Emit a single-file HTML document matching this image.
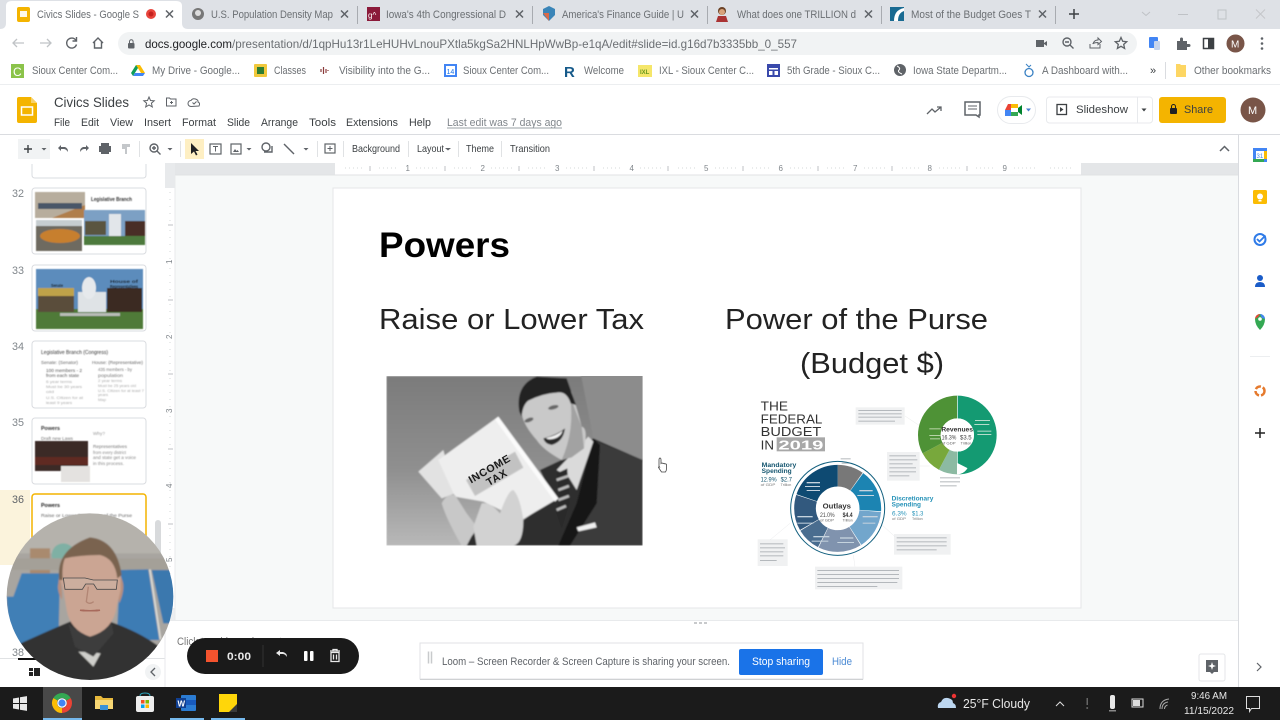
<!DOCTYPE html>
<html><head><meta charset="utf-8"><title>Civics Slides</title>
<style>
html,body{margin:0;padding:0;width:1280px;height:720px;overflow:hidden;background:#fff}
svg{display:block;filter:blur(.35px)}
text{font-family:"Liberation Sans",sans-serif;fill:#5f6368;font-size:11px}
.d{fill:#3c4043}.k{fill:#000}.w{fill:#fff}.g{fill:#80868b}
.s{fill:none;stroke:#5f6368;stroke-width:1.4}
.x{fill:none;stroke:#5f6368;stroke-width:1.5}
.t{fill:#6b6f73}
</style></head><body>
<svg width="1280" height="720" viewBox="0 0 1280 720" xmlns="http://www.w3.org/2000/svg">
<defs>
<filter id="b1"><feGaussianBlur stdDeviation="0.5"/></filter>
<filter id="b2"><feGaussianBlur stdDeviation="1"/></filter>
<filter id="b3"><feGaussianBlur stdDeviation="2.500"/></filter>
<clipPath id="cam"><circle cx="270" cy="320" r="250"/></clipPath>
<clipPath id="tax"><rect x="19" y="18" width="769" height="509"/></clipPath>
<linearGradient id="taxbg" x1="0" y1="0" x2="0" y2="1"><stop offset="0" stop-color="#7b7b7b"/><stop offset=".55" stop-color="#8f8f8f"/><stop offset="1" stop-color="#b8b8b8"/></linearGradient>
</defs>

<!-- tab strip -->
<rect width="1280" height="29" fill="#dee1e6"/>
<path d="M0 29Q6 29 6 23V6Q6 1 12 1H176Q182 1 182 6V23Q182 29 188 29Z" fill="#fff"/>
<rect x="17" y="7" width="13" height="15" rx="2" fill="#f4b400"/><rect x="20" y="11" width="7" height="6" fill="#fff" opacity=".9"/>
<text x="37" y="18" textLength="102" lengthAdjust="spacingAndGlyphs" class="t">Civics Slides - Google S</text>
<circle cx="151" cy="14" r="5" fill="#e8453c"/><circle cx="151" cy="14" r="2.500" fill="#c5221f"/>
<path d="M166 10.500l7 7m0-7l-7 7" class="x"/>
<circle cx="198" cy="14" r="6" fill="#777"/><circle cx="198" cy="13" r="3" fill="#ddd"/>
<text x="211" y="18" textLength="122" lengthAdjust="spacingAndGlyphs" class="t">U.S. Population Density Map</text>
<path d="M341 10.500l7 7m0-7l-7 7" class="x"/><rect x="357" y="6" width="1" height="18" fill="#a8abb0"/>
<rect x="367" y="7" width="13" height="14" fill="#8b1a3a"/><text x="368" y="18" style="font-size:8px;fill:#fff">g^</text>
<text x="386" y="18" textLength="120" lengthAdjust="spacingAndGlyphs" class="t">Iowa's 4th Congressional D</text>
<path d="M516 10.500l7 7m0-7l-7 7" class="x"/><rect x="532" y="6" width="1" height="18" fill="#a8abb0"/>
<path d="M543 9l6-3 6 3v6l-6 6-6-6z" fill="#3a85b8"/><path d="M543 13l6 8 0-8z" fill="#d96b4a"/>
<text x="562" y="18" textLength="122" lengthAdjust="spacingAndGlyphs" class="t">America's Finance Guide | U</text>
<path d="M691 10.500l7 7m0-7l-7 7" class="x"/><rect x="707" y="6" width="1" height="18" fill="#a8abb0"/>
<circle cx="722" cy="11" r="4" fill="#6b4226"/><circle cx="722" cy="12" r="3" fill="#d9a27a"/><path d="M716 22l2-6h8l2 6z" fill="#a33"/>
<text x="737" y="18" textLength="119" lengthAdjust="spacingAndGlyphs" class="t">What does one TRILLION d</text>
<path d="M865 10.500l7 7m0-7l-7 7" class="x"/><rect x="881" y="6" width="1" height="18" fill="#a8abb0"/>
<rect x="890" y="7" width="14" height="14" fill="#1a6b92"/><path d="M894 21q0-11 10-13v3q-6 2-6 10z" fill="#fff"/>
<text x="911" y="18" textLength="120" lengthAdjust="spacingAndGlyphs" class="t">Most of the Budget Goes T</text>
<path d="M1039 10.500l7 7m0-7l-7 7" class="x"/><rect x="1055" y="6" width="1" height="18" fill="#a8abb0"/>
<path d="M1074 9v10m-5-5h10" fill="none" stroke="#3c4043" stroke-width="1.500"/>
<path d="M1142 12l4 3.500 4-3.500" fill="none" stroke="#bfc2c6"/>
<rect x="1178" y="14" width="10" height="1" fill="#bfc2c6"/>
<rect x="1218" y="10" width="8" height="9" fill="none" stroke="#bfc2c6"/>
<path d="M1256 9.500l9 9m0-9l-9 9" fill="none" stroke="#c4c6ca"/>

<!-- address bar -->
<rect y="29" width="1280" height="29" fill="#fff"/>
<rect x="118" y="32" width="1019" height="23" rx="11.500" fill="#f1f3f4"/>
<path d="M24 43H13m4-4l-4 4 4 4" fill="none" stroke="#c0c3c6" stroke-width="1.300"/>
<path d="M40 43h11m-4-4l4 4-4 4" fill="none" stroke="#c0c3c6" stroke-width="1.300"/>
<path d="M76 40.500a5 5 0 1 0 .5 4M76.500 37v4h-4" fill="none" stroke="#5f6368" stroke-width="1.400"/>
<path d="M93 43l5-5 5 5m-8.500-1v6h7v-6" fill="none" stroke="#5f6368" stroke-width="1.400"/>
<rect x="128" y="43" width="6.500" height="5.500" rx="1" fill="#5f6368"/><path d="M129.500 43v-1.500a1.800 1.800 0 0 1 3.600 0V43" fill="none" stroke="#5f6368"/>
<text x="145" y="48" textLength="87" lengthAdjust="spacingAndGlyphs" style="font-size:12px;fill:#202124">docs.google.com</text>
<text x="232" y="48" textLength="565" lengthAdjust="spacingAndGlyphs" style="font-size:12px;fill:#6b6f73">/presentation/d/1qpHu13r1LeHUHvLnouPXtla5kgSa2HNLHpWwBp-e1qA/edit#slide=id.g16d7b3335bb_0_557</text>
<rect x="1036" y="40" width="8" height="7" fill="#5f6368"/><path d="M1044 43l3-2v5l-3-2z" fill="#5f6368"/>
<circle cx="1067" cy="42" r="4" class="s"/><path d="M1070 45l3.500 3.500M1065 42h4" class="s"/>
<path d="M1090 44v4h10v-4M1093 44q1-4 5-4V38l3.500 3.500-3.500 3v-2q-3 0-5 1z" fill="none" stroke="#5f6368"/>
<path d="M1121 37.500l1.700 3.800 4 .4-3 2.700.9 4-3.600-2.100-3.600 2.100.9-4-3-2.700 4-.4z" fill="none" stroke="#5f6368" stroke-width="1.300"/>
<rect x="1149" y="37" width="9" height="11" rx="1" fill="#4285f4"/><rect x="1154" y="41" width="6" height="9" rx="1" fill="#c6d4ec"/>
<path d="M1177 41h3v-2a1.500 1.500 0 0 1 3 0v2h4v3h2a1.500 1.500 0 0 1 0 3h-2v3h-10z" fill="#5f6368"/>
<rect x="1203.500" y="38.500" width="10" height="10" fill="none" stroke="#3c4043" stroke-width="1.500"/><rect x="1208" y="38" width="6" height="11" fill="#3c4043"/>
<circle cx="1235.500" cy="43.500" r="9" fill="#795548"/><text x="1231" y="47.500" style="font-size:10px;fill:#fff">M</text>
<circle cx="1262" cy="38.500" r="1.300" fill="#5f6368"/><circle cx="1262" cy="43.500" r="1.300" fill="#5f6368"/><circle cx="1262" cy="48.500" r="1.300" fill="#5f6368"/>

<!-- bookmarks -->
<rect y="58" width="1280" height="27" fill="#fff"/><rect y="84.500" width="1280" height="1" fill="#dadce0"/>
<rect x="11" y="64" width="13" height="14" fill="#8bc34a"/><text x="13" y="76" style="font-size:12px;fill:#fff">C</text>
<text x="32" y="74" textLength="86" lengthAdjust="spacingAndGlyphs" class="t">Sioux Center Com...</text>
<path d="M136 65h4l5 8h-4z" fill="#fbbc04"/><path d="M136 65l-5 8 2 3 5-8z" fill="#0f9d58"/><path d="M133 76h10l2-3h-10z" fill="#4285f4"/>
<text x="152" y="74" textLength="88" lengthAdjust="spacingAndGlyphs" class="t">My Drive - Google...</text>
<rect x="254" y="64" width="13" height="13" rx="1" fill="#f0c83c"/><rect x="257" y="67" width="7" height="7" fill="#2e7d32"/>
<text x="274" y="74" textLength="32" lengthAdjust="spacingAndGlyphs" class="t">Classes</text>
<path d="M321 72v-3m2.500 5v-7m2.500 6v-4m2 2v-1" fill="none" stroke="#8a3b3b" stroke-width="1.200"/>
<text x="339" y="74" textLength="91" lengthAdjust="spacingAndGlyphs" class="t">Visibility into the G...</text>
<rect x="444" y="64" width="13" height="13" fill="#4285f4"/><rect x="446" y="66" width="9" height="9" fill="#fff"/><text x="446.500" y="74" style="font-size:7px;fill:#1a73e8">14</text>
<text x="463" y="74" textLength="86" lengthAdjust="spacingAndGlyphs" class="t">Sioux Center Com...</text>
<text x="564" y="77" style="font-size:15px;font-weight:bold;fill:#165a8a">R</text>
<text x="584" y="74" textLength="40" lengthAdjust="spacingAndGlyphs" class="t">Welcome</text>
<rect x="638" y="65" width="14" height="12" fill="#f5e66a"/><text x="640" y="74" style="font-size:6px;fill:#6a9a1f;font-weight:bold">IXL</text>
<text x="659" y="74" textLength="95" lengthAdjust="spacingAndGlyphs" class="t">IXL - Sioux Center C...</text>
<rect x="767" y="64" width="13" height="13" fill="#3949ab"/><rect x="769" y="68" width="9" height="1.500" fill="#fff"/><rect x="769" y="71" width="3.500" height="4" fill="#fff"/><rect x="774.500" y="71" width="3.500" height="4" fill="#fff"/>
<text x="787" y="74" textLength="93" lengthAdjust="spacingAndGlyphs" class="t">5th Grade - Sioux C...</text>
<circle cx="900" cy="70" r="6" fill="#5f6368"/><path d="M897 66q4 2 2 4t3 4" fill="none" stroke="#fff"/>
<text x="913" y="74" textLength="94" lengthAdjust="spacingAndGlyphs" class="t">Iowa State Departm...</text>
<circle cx="1029" cy="72.500" r="4" fill="none" stroke="#3b82c4" stroke-width="1.300"/><path d="M1026 64l3 3 2-2" fill="none" stroke="#3b82c4"/>
<text x="1042" y="74" textLength="86" lengthAdjust="spacingAndGlyphs" class="t">A Dashboard with...</text>
<text x="1150" y="74" style="font-size:11px;fill:#3c4043">»</text><rect x="1165" y="62" width="1" height="17" fill="#dadce0"/>
<path d="M1176 64h4l1 1h5v12h-10z" fill="#fdd663"/>
<text x="1194" y="74" textLength="77" lengthAdjust="spacingAndGlyphs" class="t">Other bookmarks</text>

<!-- docs header -->
<rect y="85" width="1280" height="49" fill="#fff"/><rect y="134" width="1280" height="1" fill="#dadce0"/>
<path d="M17 99q0-2 2-2h12l6 6v18q0 2-2 2H19q-2 0-2-2z" fill="#f4b400"/><path d="M31 97l6 6h-6z" fill="#f8d26a"/><rect x="21.500" y="107" width="11" height="8" fill="none" stroke="#fff" stroke-width="1.500"/>
<text x="54" y="107" textLength="75" lengthAdjust="spacingAndGlyphs" style="font-size:14px;fill:#3c4043">Civics Slides</text>
<path d="M149 97l1.500 3.500 3.700.3-2.800 2.400.9 3.700-3.300-2-3.300 2 .9-3.700-2.800-2.400 3.700-.3z" fill="none" stroke="#5f6368"/>
<path d="M166.500 98h3l1 1h5.500v7h-9.500z M170 102.500h3M171.500 101v3" fill="none" stroke="#5f6368"/>
<path d="M191 106.500a3 3 0 0 1 0-6q1.500-2.500 4.500-1.500t2.500 3q2.500 1 1 4z M192.500 102.500l1.500 1.500 2.500-2.500" fill="none" stroke="#5f6368"/>
<text x="54" y="126" textLength="16" lengthAdjust="spacingAndGlyphs" class="d">File</text>
<text x="81" y="126" textLength="18" lengthAdjust="spacingAndGlyphs" class="d">Edit</text>
<text x="110" y="126" textLength="23" lengthAdjust="spacingAndGlyphs" class="d">View</text>
<text x="144" y="126" textLength="27" lengthAdjust="spacingAndGlyphs" class="d">Insert</text>
<text x="182" y="126" textLength="34" lengthAdjust="spacingAndGlyphs" class="d">Format</text>
<text x="227" y="126" textLength="23" lengthAdjust="spacingAndGlyphs" class="d">Slide</text>
<text x="261" y="126" textLength="37" lengthAdjust="spacingAndGlyphs" class="d">Arrange</text>
<text x="309" y="126" textLength="27" lengthAdjust="spacingAndGlyphs" class="d">Tools</text>
<text x="346" y="126" textLength="52" lengthAdjust="spacingAndGlyphs" class="d">Extensions</text>
<text x="409" y="126" textLength="22" lengthAdjust="spacingAndGlyphs" class="d">Help</text>
<text x="447" y="126" textLength="115" lengthAdjust="spacingAndGlyphs" class="g">Last edit was 7 days ago</text>
<rect x="447" y="127.500" width="115" height="1" fill="#9aa0a6"/>
<path d="M927 114l5-5 3 3 6-5M937 107h4v4" fill="none" stroke="#5f6368" stroke-width="1.300"/>
<path d="M965 102h15v13h-1v2l-3-2h-11z" fill="none" stroke="#5f6368" stroke-width="1.500"/><path d="M968 106h9m-9 3h9" stroke="#5f6368"/>
<rect x="997.500" y="96.500" width="38" height="27" rx="13.500" fill="#fff" stroke="#e8eaed"/>
<path d="M1005 110h6v-6h-3z" fill="#ea4335"/><rect x="1011" y="104" width="7" height="4" fill="#fbbc04"/><rect x="1005" y="110" width="6" height="6" fill="#4285f4"/><rect x="1011" y="112" width="7" height="4" fill="#34a853"/><path d="M1018 108l4-3v10l-4-3z" fill="#00832d"/>
<path d="M1026 108.500h5l-2.500 3z" fill="#4a7fd0"/>
<rect x="1046.500" y="97" width="106" height="26" rx="3" fill="#fff" stroke="#e8eaed"/><rect x="1137" y="97" width="1" height="26" fill="#e8eaed"/>
<rect x="1057" y="104.500" width="9.500" height="10" fill="none" stroke="#3c4043" stroke-width="1.300"/><path d="M1060 107v5l3.500-2.500z" fill="#3c4043"/>
<text x="1076" y="113" textLength="52" lengthAdjust="spacingAndGlyphs" class="d">Slideshow</text>
<path d="M1141.500 108.500h5l-2.500 3z" fill="#3c4043"/>
<rect x="1159" y="97" width="67" height="26" rx="3" fill="#f4b400"/>
<rect x="1170" y="108" width="7" height="6" rx="1" fill="#202124"/><path d="M1171.500 108v-1.500a2 2 0 0 1 4 0V108" fill="none" stroke="#202124"/>
<text x="1184" y="113" textLength="29" lengthAdjust="spacingAndGlyphs" class="d">Share</text>
<circle cx="1253" cy="110" r="12.500" fill="#795548"/><text x="1248" y="114" style="font-size:11px;fill:#fff">M</text>

<!-- toolbar -->
<rect y="135" width="1238" height="28" fill="#fff"/>
<rect x="18" y="139" width="32" height="20" fill="#f1f3f4"/>
<path d="M28 145v8m-4-4h8" fill="none" stroke="#3c4043" stroke-width="1.400"/><path d="M41.500 148h5l-2.500 2.500z" fill="#5f6368"/>
<path d="M58 148l3-3v2h4q3 1 3 5q-2-3-4-3h-3v2z" fill="#5f6368"/>
<path d="M89 148l-3-3v2h-3q-3 1-3 5q2-3 4-3h2v2z" fill="#5f6368"/>
<path d="M101 146v-3h8v3h2v6h-2v2h-8v-2h-2v-6z" fill="#5f6368"/>
<path d="M122 144h8v3h-3v7h-2v-5h-3z" fill="#c4c7ca"/>
<rect x="139" y="141" width="1" height="16" fill="#e0e2e4"/>
<circle cx="154" cy="148" r="4" class="s"/><path d="M157 151l3.500 3.500M152 148h4m-2-2v4" class="s"/><path d="M167.500 148h5l-2.500 2.500z" fill="#5f6368"/>
<rect x="180" y="141" width="1" height="16" fill="#e0e2e4"/>
<rect x="185" y="139" width="19" height="20" fill="#feefc3"/><path d="M191 143v11l3-2.500 2 4 1.500-1-2-3.500h3.500z" fill="#202124"/>
<rect x="210" y="144" width="11" height="10" fill="none" stroke="#5f6368" stroke-width="1.200"/><path d="M213 146.500h5m-2.500 0v5" stroke="#5f6368"/>
<rect x="231" y="144" width="10" height="10" fill="none" stroke="#5f6368" stroke-width="1.200"/><path d="M233 152l2-3 1.500 2 1-1 1.500 2z" fill="#5f6368"/><path d="M246.500 148h5l-2.500 2.500z" fill="#5f6368"/>
<circle cx="266" cy="147" r="4" class="s"/><path d="M264 152h8v-6" class="s"/>
<path d="M284 144l10 10" stroke="#5f6368" stroke-width="1.400"/><path d="M303.500 148h5l-2.500 2.500z" fill="#5f6368"/>
<rect x="317" y="141" width="1" height="16" fill="#e0e2e4"/>
<rect x="325" y="144" width="10" height="9" fill="none" stroke="#5f6368" stroke-width="1.200"/><path d="M330 146v5m-2.500-2.500h5" stroke="#5f6368"/>
<rect x="343" y="141" width="1" height="16" fill="#e0e2e4"/>
<text x="352" y="152" textLength="48" lengthAdjust="spacingAndGlyphs" style="font-size:10.500px" class="d">Background</text>
<rect x="408" y="141" width="1" height="16" fill="#e0e2e4"/>
<text x="417" y="152" textLength="27" lengthAdjust="spacingAndGlyphs" style="font-size:10.500px" class="d">Layout</text><path d="M445 148h6l-3 2.500z" fill="#5f6368"/>
<rect x="458" y="141" width="1" height="16" fill="#e0e2e4"/>
<text x="466" y="152" textLength="28" lengthAdjust="spacingAndGlyphs" style="font-size:10.500px" class="d">Theme</text>
<rect x="501" y="141" width="1" height="16" fill="#e0e2e4"/>
<text x="510" y="152" textLength="40" lengthAdjust="spacingAndGlyphs" style="font-size:10.500px" class="d">Transition</text>
<path d="M1220 151l4.500-4.500 4.500 4.500" fill="none" stroke="#5f6368" stroke-width="1.500"/>

<!-- canvas -->
<rect x="165" y="163" width="1073" height="457" fill="#f7f9f9"/>
<rect x="175" y="163" width="1063" height="12" fill="#e4e6e8"/>
<rect x="335" y="163" width="746" height="12" fill="#fff"/>
<rect x="165" y="163" width="10" height="457" fill="#fff"/>
<rect x="165" y="163" width="10" height="25" fill="#e8eaec"/><rect x="165" y="608" width="10" height="12" fill="#eceef0"/>
<rect x="175" y="174.500" width="1063" height="1" fill="#e0e2e4"/>
<rect x="174.500" y="175" width="1" height="445" fill="#e8eaec"/>
<path d="M370 166v5M445 166v5M519 166v5M594 166v5M668 166v5M743 166v5M818 166v5M892 166v5M967 166v5" stroke="#bfc2c4"/>
<path d="M345 168h20M379 168h20M416 168h22M454 168h20M491 168h22M528 168h20M566 168h22M603 168h20M640 168h22M678 168h20M715 168h22M752 168h20M790 168h22M827 168h20M864 168h22M902 168h20M939 168h22M976 168h20M1014 168h22M1050 168h22" stroke="#d6d8da" stroke-dasharray="1 3"/>
<text x="405.500" y="171" style="font-size:8px;fill:#80868b">1</text><text x="480.500" y="171" style="font-size:8px;fill:#80868b">2</text><text x="555" y="171" style="font-size:8px;fill:#80868b">3</text><text x="629.500" y="171" style="font-size:8px;fill:#80868b">4</text><text x="704" y="171" style="font-size:8px;fill:#80868b">5</text><text x="778.500" y="171" style="font-size:8px;fill:#80868b">6</text><text x="853" y="171" style="font-size:8px;fill:#80868b">7</text><text x="927.500" y="171" style="font-size:8px;fill:#80868b">8</text><text x="1002.500" y="171" style="font-size:8px;fill:#80868b">9</text>
<path d="M168 225h5M168 300h5M168 374h5M168 449h5M168 524h5" stroke="#bfc2c4"/>
<path d="M170 192v30M170 230v30M170 268v30M170 304v30M170 342v30M170 378v30M170 416v30M170 454v30M170 490v30M170 528v30M170 566v30" stroke="#d6d8da" stroke-dasharray="1 6"/>
<text x="172" y="264" transform="rotate(-90 172 264)" style="font-size:8px;fill:#80868b">1</text>
<text x="172" y="339" transform="rotate(-90 172 339)" style="font-size:8px;fill:#80868b">2</text>
<text x="172" y="413" transform="rotate(-90 172 413)" style="font-size:8px;fill:#80868b">3</text>
<text x="172" y="488" transform="rotate(-90 172 488)" style="font-size:8px;fill:#80868b">4</text>
<text x="172" y="562" transform="rotate(-90 172 562)" style="font-size:8px;fill:#80868b">5</text>

<!-- slide -->
<rect x="333" y="188" width="748" height="420" fill="#fff" stroke="#e4e6e8"/>
<text x="379" y="257" textLength="131" lengthAdjust="spacingAndGlyphs" style="font-size:35px;font-weight:bold;fill:#000">Powers</text>
<text x="379" y="329" textLength="265" lengthAdjust="spacingAndGlyphs" style="font-size:29px;fill:#222">Raise or Lower Tax</text>
<text x="725" y="329" textLength="263" lengthAdjust="spacingAndGlyphs" style="font-size:29px;fill:#222">Power of the Purse</text>
<text x="800" y="373" textLength="144" lengthAdjust="spacingAndGlyphs" style="font-size:29px;fill:#222">(Budget $)</text>

<!-- income tax image -->
<g transform="translate(380 370) scale(.33333)" clip-path="url(#tax)">
<g filter="url(#b3)">
<rect x="19" y="18" width="769" height="509" fill="url(#taxbg)"/>
<path d="M600 0H790V275L640 205z" fill="#8c8c8c"/>
<path d="M480 300L540 272 640 205 788 270V527H250L300 470 430 450 520 385z" fill="#2d2d2d"/>
<path d="M650 215L788 270V527H540L600 400z" fill="#3a3a3a"/>
<path d="M535 527L590 400 640 205 660 225 650 400 570 527z" fill="#141414"/>
<path d="M530 300L625 200 640 215 590 360 565 320z" fill="#dadada"/>
<path d="M530 310L562 295 568 400 545 475 528 425 540 380z" fill="#2c2c2c"/>
<path d="M530 330l35-12M535 360l32-12M535 390l32-12M530 420l28-12" stroke="#bbb" stroke-width="8"/>
<path d="M590 472l55-15 5 15-55 12z" fill="#f0f0f0"/>
<path d="M425 130Q415 55 470 35T575 65Q595 130 605 170 625 175 612 235 575 262 545 270 490 240 470 210 430 165 425 130z" fill="#c9c9c9"/>
<path d="M570 80L605 170 612 235 575 262 545 270Q585 180 570 80z" fill="#a2a2a2"/>
<path d="M418 125Q405 45 470 20L560 25 588 105 572 100Q560 62 530 68 490 70 445 92 428 105 425 140z" fill="#222"/>
<path d="M490 205Q530 195 555 175 550 215 515 225 495 222 490 205z" fill="#2a2a2a"/><path d="M498 204q30-6 50-22-5 18-25 24-18 5-25-2z" fill="#f4f4f4"/>
<ellipse cx="447" cy="150" rx="14" ry="6" transform="rotate(-20 447 150)" fill="#666"/><ellipse cx="520" cy="112" rx="16" ry="6" transform="rotate(-15 520 112)" fill="#666"/>
<path d="M115 305L190 240 225 370 185 385z" fill="#e2e2e2"/>
<path d="M175 270L355 140 535 385 425 450 310 395 225 380z" fill="#eeeeee"/>
<path d="M355 140L535 385 525 395 345 148z" fill="#fbfbfb"/>
<path d="M258 330L405 245 430 293 285 378z" fill="#c2c2c2"/>
<path d="M185 400Q200 370 225 375L260 430 290 470 260 527H245Q200 450 185 400z" fill="#c8c8c8"/>
<path d="M305 400Q330 395 360 430 385 360 400 360 420 380 430 450 430 520 400 527H290L280 470z" fill="#d2d2d2"/>
</g>
<text x="334" y="306" text-anchor="middle" transform="rotate(-30 334 306)" style="font-size:32px;font-weight:bold;fill:#1a1a1a" letter-spacing="2">INCOME</text>
<text x="356" y="332" text-anchor="middle" transform="rotate(-30 356 332)" style="font-size:32px;font-weight:bold;fill:#1a1a1a" letter-spacing="2">TAX</text>
</g>
<!-- cursor -->
<path d="M659 460q0-2 1-2t1 2v3.500q1-1 2 0 1-.5 2 .5 1-.5 1.500.5v4q0 2-1 3.500h-4l-3-4.500q0-1 1-.5l-.5-1z" fill="#fff" stroke="#444" stroke-width=".8"/>

<!-- budget infographic -->
<g transform="translate(740 390) scale(.33333)">
<text x="62" y="62" textLength="82" lengthAdjust="spacingAndGlyphs" style="font-size:40px;fill:#333">THE</text>
<text x="62" y="100" textLength="185" lengthAdjust="spacingAndGlyphs" style="font-size:40px;fill:#333">FEDERAL</text>
<text x="62" y="138" textLength="182" lengthAdjust="spacingAndGlyphs" style="font-size:40px;fill:#333">BUDGET</text>
<text x="62" y="178" textLength="40" lengthAdjust="spacingAndGlyphs" style="font-size:40px;fill:#333">IN</text>
<rect x="110" y="142" width="145" height="42" fill="#a8a8a8"/><text x="115" y="178" textLength="135" lengthAdjust="spacingAndGlyphs" style="font-size:38px;font-weight:bold;fill:#fff">2019</text>
<text x="65" y="231" textLength="104" lengthAdjust="spacingAndGlyphs" style="font-size:18px;font-weight:bold;fill:#14556f">Mandatory</text>
<text x="65" y="249" textLength="90" lengthAdjust="spacingAndGlyphs" style="font-size:18px;font-weight:bold;fill:#14556f">Spending</text>
<text x="62" y="275" textLength="48" lengthAdjust="spacingAndGlyphs" style="font-size:20px;fill:#14556f">12.9%</text><text x="122" y="275" textLength="34" lengthAdjust="spacingAndGlyphs" style="font-size:20px;fill:#14556f">$2.7</text>
<text x="62" y="288" textLength="44" lengthAdjust="spacingAndGlyphs" style="font-size:12px;fill:#777">of GDP</text><text x="122" y="288" textLength="32" lengthAdjust="spacingAndGlyphs" style="font-size:12px;fill:#777">Trillion</text>
<text x="455" y="331" textLength="125" lengthAdjust="spacingAndGlyphs" style="font-size:18px;font-weight:bold;fill:#2592b8">Discretionary</text>
<text x="455" y="349" textLength="88" lengthAdjust="spacingAndGlyphs" style="font-size:18px;font-weight:bold;fill:#2592b8">Spending</text>
<text x="456" y="377" textLength="44" lengthAdjust="spacingAndGlyphs" style="font-size:20px;fill:#2592b8">6.3%</text><text x="516" y="377" textLength="34" lengthAdjust="spacingAndGlyphs" style="font-size:20px;fill:#2592b8">$1.3</text>
<text x="456" y="390" textLength="42" lengthAdjust="spacingAndGlyphs" style="font-size:12px;fill:#777">of GDP</text><text x="516" y="390" textLength="32" lengthAdjust="spacingAndGlyphs" style="font-size:12px;fill:#777">Trillion</text>
<g fill="#f0f1f2" filter="url(#b1)"><rect x="347" y="52" width="147" height="52"/><rect x="441" y="186" width="98" height="86"/><rect x="462" y="432" width="170" height="62"/><rect x="225" y="530" width="262" height="68"/><rect x="53" y="448" width="90" height="80"/></g>
<g fill="#b4b8bc" filter="url(#b2)"><rect x="355" y="60" width="130" height="3"/><rect x="355" y="70" width="130" height="3"/><rect x="355" y="80" width="130" height="3"/><rect x="355" y="92" width="110" height="3"/>
<rect x="448" y="196" width="80" height="3"/><rect x="448" y="208" width="84" height="3"/><rect x="448" y="220" width="70" height="3"/><rect x="448" y="232" width="80" height="3"/><rect x="448" y="244" width="80" height="3"/><rect x="448" y="256" width="60" height="3"/>
<rect x="470" y="442" width="150" height="3"/><rect x="470" y="454" width="150" height="3"/><rect x="470" y="466" width="150" height="3"/><rect x="470" y="478" width="120" height="3"/>
<rect x="232" y="540" width="245" height="3"/><rect x="232" y="552" width="245" height="3"/><rect x="232" y="564" width="245" height="3"/><rect x="232" y="576" width="240" height="3"/><rect x="232" y="588" width="180" height="3"/>
<rect x="60" y="460" width="70" height="3"/><rect x="60" y="472" width="75" height="3"/><rect x="60" y="484" width="70" height="3"/><rect x="60" y="496" width="70" height="3"/><rect x="60" y="510" width="50" height="3"/>
<rect x="600" y="262" width="60" height="3"/><rect x="600" y="274" width="60" height="3"/><rect x="600" y="286" width="50" height="3"/><rect x="302" y="205" width="30" height="3"/><rect x="305" y="218" width="26" height="3"/><rect x="305" y="230" width="30" height="3"/></g>
<path d="M495 78l45 30M539 228h30M415 395l50 45M150 400l-60 50M340 495l5 35" stroke="#dfe1e3" fill="none"/>
<g transform="rotate(-90 652 135)" fill="none" stroke-width="68">
<circle cx="652" cy="135" r="84" pathLength="360" stroke="#149a72" stroke-dasharray="180 180"/>
<circle cx="652" cy="135" r="84" pathLength="360" stroke="#8cbaa2" stroke-dasharray="28 332" stroke-dashoffset="-180"/>
<circle cx="652" cy="135" r="84" pathLength="360" stroke="#78a83c" stroke-dasharray="34 326" stroke-dashoffset="-208"/>
<circle cx="652" cy="135" r="84" pathLength="360" stroke="#4e9236" stroke-dasharray="118 242" stroke-dashoffset="-242"/>
</g>
<path d="M652 17v235" stroke="#fff" stroke-width="2"/>
<circle cx="652" cy="135" r="50" fill="#fff"/>
<text x="604" y="125" textLength="95" lengthAdjust="spacingAndGlyphs" style="font-size:20px;font-weight:bold;fill:#333">Revenues</text>
<text x="605" y="148" textLength="44" lengthAdjust="spacingAndGlyphs" style="font-size:18px;fill:#444">16.3%</text><text x="660" y="148" textLength="35" lengthAdjust="spacingAndGlyphs" style="font-size:18px;fill:#444">$3.5</text>
<text x="605" y="163" textLength="42" lengthAdjust="spacingAndGlyphs" style="font-size:12px;fill:#666">of GDP</text><text x="662" y="163" textLength="32" lengthAdjust="spacingAndGlyphs" style="font-size:12px;fill:#666">Trillion</text>
<g fill="#b5dccb" filter="url(#b2)"><rect x="705" y="90" width="45" height="3"/><rect x="703" y="102" width="45" height="3"/><rect x="712" y="122" width="42" height="3"/><rect x="712" y="132" width="42" height="3"/></g>
<g fill="#b8d3a6" filter="url(#b2)"><rect x="568" y="115" width="34" height="3"/><rect x="568" y="135" width="34" height="3"/><rect x="570" y="145" width="30" height="3"/></g>
<circle cx="293" cy="355" r="141" fill="none" stroke="#13607f" stroke-width="3"/>
<g transform="rotate(-90 293 355)" fill="none" stroke-width="65">
<circle cx="293" cy="355" r="98" pathLength="360" stroke="#787878" stroke-dasharray="35 325"/>
<circle cx="293" cy="355" r="98" pathLength="360" stroke="#1c84b2" stroke-dasharray="58 302" stroke-dashoffset="-36"/>
<circle cx="293" cy="355" r="98" pathLength="360" stroke="#72a6cc" stroke-dasharray="52 308" stroke-dashoffset="-95"/>
<circle cx="293" cy="355" r="98" pathLength="360" stroke="#8093ae" stroke-dasharray="58 302" stroke-dashoffset="-148"/>
<circle cx="293" cy="355" r="98" pathLength="360" stroke="#4a6d8f" stroke-dasharray="32 328" stroke-dashoffset="-207"/>
<circle cx="293" cy="355" r="98" pathLength="360" stroke="#32597e" stroke-dasharray="48 312" stroke-dashoffset="-240"/>
<circle cx="293" cy="355" r="98" pathLength="360" stroke="#0e4a72" stroke-dasharray="71 289" stroke-dashoffset="-289"/>
</g>
<circle cx="293" cy="355" r="64" fill="#fff"/>
<text x="248" y="355" textLength="85" lengthAdjust="spacingAndGlyphs" style="font-size:21px;font-weight:bold;fill:#333">Outlays</text>
<text x="240" y="381" textLength="44" lengthAdjust="spacingAndGlyphs" style="font-size:18px;fill:#444">21.0%</text><text x="308" y="381" textLength="30" lengthAdjust="spacingAndGlyphs" style="font-size:18px;font-weight:bold;fill:#333">$4.4</text>
<text x="240" y="395" textLength="42" lengthAdjust="spacingAndGlyphs" style="font-size:12px;fill:#666">of GDP</text><text x="308" y="395" textLength="30" lengthAdjust="spacingAndGlyphs" style="font-size:12px;fill:#666">Trillion</text>
<g fill="#c5d3de" filter="url(#b2)"><rect x="200" y="276" width="40" height="4"/><rect x="195" y="288" width="45" height="3"/><rect x="200" y="300" width="40" height="3"/><rect x="358" y="300" width="40" height="4"/><rect x="352" y="315" width="50" height="3"/><rect x="368" y="378" width="45" height="4"/><rect x="368" y="398" width="38" height="3"/><rect x="300" y="442" width="40" height="4"/><rect x="292" y="456" width="50" height="3"/><rect x="220" y="438" width="48" height="4"/><rect x="215" y="452" width="50" height="3"/><rect x="172" y="378" width="46" height="4"/><rect x="172" y="398" width="48" height="3"/></g>
</g>

<!-- filmstrip -->
<rect x="0" y="163" width="165" height="524" fill="#fff"/>
<rect x="0" y="490" width="30" height="75" fill="#fbf3dc"/>
<text x="12" y="197" textLength="12" lengthAdjust="spacingAndGlyphs" style="fill:#80868b">32</text>
<text x="12" y="274" textLength="12" lengthAdjust="spacingAndGlyphs" style="fill:#80868b">33</text>
<text x="12" y="350" textLength="12" lengthAdjust="spacingAndGlyphs" style="fill:#80868b">34</text>
<text x="12" y="426" textLength="12" lengthAdjust="spacingAndGlyphs" style="fill:#80868b">35</text>
<text x="12" y="503" textLength="12" lengthAdjust="spacingAndGlyphs" style="fill:#5f6368">36</text>
<text x="12" y="656" textLength="12" lengthAdjust="spacingAndGlyphs" style="fill:#80868b">38</text>
<path d="M32 164v11q0 3 3 3h108q3 0 3-3v-11" fill="#fff" stroke="#dadce0"/>
<g fill="#fff" stroke="#dadce0" stroke-width="1"><rect x="32" y="188" width="114" height="66" rx="3"/><rect x="32" y="265" width="114" height="66" rx="3"/><rect x="32" y="341" width="114" height="67" rx="3"/><rect x="32" y="418" width="114" height="66" rx="3"/></g>
<rect x="32" y="494" width="114" height="70" rx="3" fill="#fff" stroke="#f4b400" stroke-width="1.500"/>
<g filter="url(#b1)">
<rect x="35" y="192" width="50" height="26" fill="#b7ad9d"/><path d="M52 218L85 205V218z" fill="#b07e4c"/><rect x="38" y="203" width="44" height="6" fill="#4a5668"/>
<rect x="36" y="220" width="46" height="31" fill="#6e6a60"/><ellipse cx="60" cy="236" rx="20" ry="7" fill="#c77f2e"/><rect x="36" y="220" width="46" height="6" fill="#c6cdd0"/>
<rect x="84" y="210" width="61" height="35" fill="#7ca0c4"/><rect x="84" y="236" width="61" height="9" fill="#4e7a3c"/>
<rect x="85" y="221" width="21" height="14" fill="#5a5540"/><rect x="125" y="221" width="20" height="15" fill="#4a2f26"/><rect x="109" y="214" width="12" height="22" fill="#e2e6ea"/>
<rect x="36" y="269" width="107" height="40" fill="#5c8cbc"/><rect x="36" y="309" width="107" height="20" fill="#4f7a38"/>
<rect x="78" y="292" width="28" height="20" fill="#dfe3e6"/><ellipse cx="89" cy="288" rx="7" ry="11" fill="#e6e9ec"/>
<rect x="38" y="288" width="36" height="24" fill="#5a4d3a"/><rect x="38" y="288" width="36" height="8" fill="#bfa24a"/>
<rect x="107" y="288" width="35" height="24" fill="#3a2a20"/>
<rect x="60" y="313" width="60" height="3" fill="#b8bcb6"/>
<rect x="35" y="441" width="53" height="30" fill="#3a2a26"/><rect x="35" y="457" width="53" height="8" fill="#5e2a22"/>
<rect x="61" y="466" width="29" height="16" fill="#e4e2e0"/>
<text x="91" y="201" textLength="41" lengthAdjust="spacingAndGlyphs" style="font-size:5px;font-weight:bold;fill:#333">Legislative Branch</text>
<text x="51" y="287" textLength="12" lengthAdjust="spacingAndGlyphs" style="font-size:4.500px;font-weight:bold;fill:#111">Senate</text>
<text x="110" y="283" textLength="28" lengthAdjust="spacingAndGlyphs" style="font-size:4.500px;font-weight:bold;fill:#111">House of</text>
<text x="110" y="288" textLength="28" lengthAdjust="spacingAndGlyphs" style="font-size:4.500px;font-weight:bold;fill:#111">Representatives</text>
<text x="41" y="354" textLength="67" lengthAdjust="spacingAndGlyphs" style="font-size:5px;fill:#333">Legislative Branch (Congress)</text>
<g style="font-size:5px">
<text x="41" y="364" textLength="37" lengthAdjust="spacingAndGlyphs" style="font-size:4.500px;fill:#666">Senate: (Senator)</text>
<text x="92" y="364" textLength="51" lengthAdjust="spacingAndGlyphs" style="font-size:4.500px;fill:#666">House: (Representative)</text>
<text x="46" y="372" textLength="36" lengthAdjust="spacingAndGlyphs" style="font-size:4.500px;fill:#555">100 members - 2</text>
<text x="46" y="377" textLength="33" lengthAdjust="spacingAndGlyphs" style="font-size:4.500px;fill:#555">from each state</text>
<text x="46" y="383" textLength="26" lengthAdjust="spacingAndGlyphs" style="font-size:4px;fill:#aaa">6 year terms</text>
<text x="46" y="388" textLength="36" lengthAdjust="spacingAndGlyphs" style="font-size:4px;fill:#aaa">Must be 30 years</text>
<text x="46" y="393" textLength="8" lengthAdjust="spacingAndGlyphs" style="font-size:4px;fill:#aaa">old</text>
<text x="46" y="399" textLength="37" lengthAdjust="spacingAndGlyphs" style="font-size:4px;fill:#aaa">U.S. Citizen for at</text>
<text x="46" y="404" textLength="26" lengthAdjust="spacingAndGlyphs" style="font-size:4px;fill:#aaa">least 9 years</text>
<text x="98" y="371" textLength="34" lengthAdjust="spacingAndGlyphs" style="font-size:4.500px;fill:#777">435 members - by</text>
<text x="98" y="377" textLength="25" lengthAdjust="spacingAndGlyphs" style="font-size:4.500px;fill:#777">population</text>
<text x="98" y="382" textLength="24" lengthAdjust="spacingAndGlyphs" style="font-size:4px;fill:#aaa">2 year terms</text>
<text x="98" y="387" textLength="38" lengthAdjust="spacingAndGlyphs" style="font-size:4px;fill:#aaa">Must be 25 years old</text>
<text x="98" y="392" textLength="46" lengthAdjust="spacingAndGlyphs" style="font-size:4px;fill:#aaa">U.S. Citizen for at least 7</text>
<text x="98" y="396" textLength="10" lengthAdjust="spacingAndGlyphs" style="font-size:4px;fill:#aaa">years</text>
<text x="98" y="401" textLength="8" lengthAdjust="spacingAndGlyphs" style="font-size:4px;fill:#aaa">Map</text>
</g>
<text x="41" y="430" textLength="19" lengthAdjust="spacingAndGlyphs" style="font-size:5.500px;font-weight:bold;fill:#333">Powers</text>
<text x="41" y="440" textLength="32" lengthAdjust="spacingAndGlyphs" style="font-size:4.500px;fill:#777">Draft new Laws</text>
<text x="93" y="435" textLength="12" lengthAdjust="spacingAndGlyphs" style="font-size:4.500px;fill:#999">Why?</text>
<text x="93" y="448" textLength="34" lengthAdjust="spacingAndGlyphs" style="font-size:4.500px;fill:#777">Representatives</text>
<text x="93" y="454" textLength="33" lengthAdjust="spacingAndGlyphs" style="font-size:4.500px;fill:#888">from every district</text>
<text x="93" y="459" textLength="43" lengthAdjust="spacingAndGlyphs" style="font-size:4.500px;fill:#888">and state get a voice</text>
<text x="93" y="465" textLength="31" lengthAdjust="spacingAndGlyphs" style="font-size:4.500px;fill:#888">in this process.</text>
<text x="41" y="507" textLength="19" lengthAdjust="spacingAndGlyphs" style="font-size:5.500px;font-weight:bold;fill:#222">Powers</text>
<text x="41" y="517" textLength="91" lengthAdjust="spacingAndGlyphs" style="font-size:4.500px;fill:#666">Raise or Lower Tax      Power of the Purse</text>
</g>
<rect x="155" y="520" width="6" height="60" rx="3" fill="#d8dadc"/>
<rect x="0" y="658" width="165" height="1" fill="#e0e2e4"/><rect x="18" y="658" width="30" height="2" fill="#111"/>
<rect x="29" y="668" width="11" height="8" fill="#222"/><rect x="33" y="668" width="1" height="8" fill="#fff"/><rect x="29" y="671" width="4" height="1" fill="#fff"/>
<circle cx="153" cy="672" r="8" fill="#f1f3f4"/><path d="M155 668l-4 4 4 4" fill="none" stroke="#5f6368" stroke-width="1.300"/>

<!-- notes -->
<rect x="165" y="620" width="1073" height="67" fill="#fff"/><rect x="165" y="620" width="1073" height="1" fill="#e8eaec"/>
<rect x="164.500" y="620" width="1" height="67" fill="#e8eaec"/>
<path d="M694 623h3m2 0h3m2 0h3" stroke="#c8cacc" stroke-width="2"/>
<text x="177" y="645" textLength="115" lengthAdjust="spacingAndGlyphs" style="font-size:11px;fill:#777">Click to add speaker notes</text>

<!-- right sidebar -->
<rect x="1238" y="135" width="42" height="552" fill="#fff"/><rect x="1238" y="135" width="1" height="552" fill="#dadce0"/>
<rect x="1253" y="148" width="14" height="14" fill="#4285f4"/><rect x="1253" y="159" width="11" height="3" fill="#34a853"/><rect x="1264" y="151" width="3" height="8" fill="#fbbc04"/><rect x="1256" y="151" width="8" height="8" fill="#fff"/><text x="1256.500" y="158" style="font-size:6px;fill:#4285f4">31</text>
<rect x="1253" y="190" width="14" height="14" rx="1.500" fill="#fbbc04"/><circle cx="1260" cy="196.500" r="3" fill="#fff"/><rect x="1258.500" y="200" width="3" height="1.500" fill="#fff"/>
<circle cx="1260" cy="239.500" r="5.500" fill="none" stroke="#2f7be8" stroke-width="2"/><path d="M1257 239l2.500 2.500 6-6" fill="none" stroke="#2f7be8" stroke-width="1.800"/>
<circle cx="1260" cy="278" r="3" fill="#1a5cc8"/><path d="M1255 287q0-5 5-5t5 5z" fill="#1a5cc8"/>
<path d="M1260 330q-5-5-5-11a5 5 0 0 1 10 0q0 6-5 11z" fill="#34a853"/><path d="M1255 319a5 5 0 0 1 5-5l-2 3z" fill="#ea4335"/><path d="M1260 314a5 5 0 0 1 5 5l-3-1z" fill="#4285f4"/><circle cx="1260" cy="319" r="1.800" fill="#fff"/>
<rect x="1250" y="356" width="20" height="1" fill="#eceef0"/>
<circle cx="1260" cy="391" r="4.500" fill="none" stroke="#e57a2e" stroke-width="2.500" stroke-dasharray="6 2"/>
<path d="M1260 428v10m-5-5h10" stroke="#222" stroke-width="1.500"/>

<rect x="1199" y="654" width="26" height="27" rx="2" fill="#fff" stroke="#e4e6e8"/>
<path d="M1206 660h12v12h-4l-2 2-2-2h-4z" fill="#5f6368"/><path d="M1212 662l1 3 3 1-3 1-1 3-1-3-3-1 3-1z" fill="#fff"/>
<path d="M1257 663l4 4-4 4" fill="none" stroke="#5f6368" stroke-width="1.200"/>

<!-- sharing banner -->
<rect x="420" y="643" width="443" height="36" fill="#fff" stroke="#e0e2e4"/><rect x="420" y="679" width="443" height="1" fill="#cfd1d3"/>
<path d="M428.500 651v12M431.500 651v12" stroke="#c8cacc" stroke-width="1.500" transform="translate(0 .5)"/>
<text x="442" y="665" textLength="288" lengthAdjust="spacingAndGlyphs" style="font-size:11px;fill:#5f6368">Loom – Screen Recorder &amp; Screen Capture is sharing your screen.</text>
<rect x="739" y="649" width="84" height="26" rx="2" fill="#1a73e8"/>
<text x="752" y="665" textLength="58" lengthAdjust="spacingAndGlyphs" style="font-size:11px;fill:#fff">Stop sharing</text>
<text x="832" y="665" textLength="20" lengthAdjust="spacingAndGlyphs" style="font-size:11px;fill:#4a8ad4">Hide</text>

<!-- webcam -->
<g transform="translate(0 490) scale(.33333)">
<g clip-path="url(#cam)">
<g filter="url(#b3)">
<rect x="0" y="60" width="540" height="520" fill="#a8a5a0"/>
<rect x="0" y="60" width="540" height="130" fill="#b5b2ac"/>
<rect x="90" y="175" width="60" height="80" fill="#a98a6e"/>
<circle cx="190" cy="195" r="35" fill="#7fb0a4"/>
<rect x="0" y="205" width="540" height="35" fill="#a4a098"/>
<path d="M20 320H40L65 250H180L175 470H30z" fill="#3f7fb6"/>
<path d="M360 240L445 238 478 450H350z" fill="#3d7cb4"/>
<path d="M455 240H530V400H490z" fill="#3a78ae"/>
<path d="M447 238l5 0 32 210-5 0z" fill="#e0ded8"/>
<path d="M40 470Q150 420 210 395L330 395Q430 430 490 480V580H40z" fill="#333"/>
<path d="M235 485l45 45 22-40-22-3z" fill="#cfcfcb"/>
<path d="M205 400Q260 460 335 400L340 430 280 500 225 470z" fill="#3c3c3c"/>
<path d="M178 250Q190 310 185 330 170 300 175 280zM360 250Q350 310 358 340 375 300 368 275z" fill="#b88f7c"/>
<path d="M180 265Q175 170 270 160 355 160 362 250L362 300 350 350Q340 420 270 440 210 420 200 360L190 300z" fill="#cba593"/>
<path d="M178 270Q165 180 270 142 350 150 365 255L352 265Q345 205 300 195 240 195 195 205 185 225 188 270z" fill="#7a6350"/>
</g>
<path d="M190 264h65l25 6h72l-3 28h-58l-10-16h-24l-10 16h-52z" fill="#cdbcb0" fill-opacity=".4" stroke="#4a4a4a" stroke-width="2.500" filter="url(#b1)"/>
<path d="M240 360q30 6 60 0" fill="none" stroke="#a86a5c" stroke-width="6" filter="url(#b2)"/>
<path d="M265 290l-6 45q10 10 22 0" fill="none" stroke="#b28674" stroke-width="4" filter="url(#b2)"/>
</g>
</g>

<!-- loom pill -->
<rect x="187" y="638" width="172" height="36" rx="18" fill="#1a1a1a"/>
<rect x="206" y="650" width="12" height="12" fill="#f4532e"/>
<text x="227" y="660" textLength="24" lengthAdjust="spacingAndGlyphs" style="font-size:11px;font-weight:bold;fill:#e8e8e8">0:00</text>
<rect x="262.500" y="645" width="1" height="22" fill="#333"/>
<path d="M276 653l4-3v2h3q4 1 4 5-2-3-4-3h-3v2z" fill="#e8e8e8"/>
<rect x="304" y="651" width="3.500" height="10" rx="1" fill="#fff"/><rect x="310" y="651" width="3.500" height="10" rx="1" fill="#fff"/>
<path d="M330 651h10M333 651v-1.500h4v1.500M331 652.500h8v9h-8zM333.500 654.500v5M336.500 654.500v5" fill="none" stroke="#e8e8e8" stroke-width="1.300"/>

<!-- taskbar -->
<rect y="687" width="1280" height="33" fill="#1b1b1b"/>
<rect x="43" y="687" width="39" height="33" fill="#484848"/>
<path d="M13 698.500l6-1v5.500h-6zM20 697.300l7-1.200v6.900h-7zM13 704h6v5.500l-6-1zM20 704h7v6.900l-7-1.200z" fill="#e8e8e8"/>
<g transform="rotate(-30 62 703)"><g fill="none" stroke-width="5">
<circle cx="62" cy="703" r="7.500" pathLength="360" stroke="#ea4335" stroke-dasharray="120 240"/>
<circle cx="62" cy="703" r="7.500" pathLength="360" stroke="#fbbc04" stroke-dasharray="120 240" stroke-dashoffset="-120"/>
<circle cx="62" cy="703" r="7.500" pathLength="360" stroke="#34a853" stroke-dasharray="120 240" stroke-dashoffset="-240"/></g></g>
<circle cx="62" cy="703" r="4.800" fill="#fff"/><circle cx="62" cy="703" r="3.600" fill="#4285f4"/>
<path d="M95 696h6l2 2h10v11H95z" fill="#e8b93c"/><rect x="95" y="700" width="18" height="9" fill="#f7d774"/><rect x="100" y="705" width="8" height="5" fill="#3a92d8"/>
<rect x="136" y="696" width="18" height="16" rx="2" fill="#eee"/><path d="M140 696q0-3 5-3t5 3" fill="none" stroke="#2aa8c0"/><rect x="141" y="700" width="3.500" height="3.500" fill="#f25022"/><rect x="145.500" y="700" width="3.500" height="3.500" fill="#7fba00"/><rect x="141" y="704.500" width="3.500" height="3.500" fill="#00a4ef"/><rect x="145.500" y="704.500" width="3.500" height="3.500" fill="#ffb900"/>
<rect x="181" y="695" width="15" height="16" rx="1" fill="#2b7cd3"/><rect x="181" y="700" width="15" height="5" fill="#185abd"/><rect x="176" y="698" width="10" height="10" fill="#103f91"/><text x="177.500" y="706.500" style="font-size:8px;font-weight:bold;fill:#fff">W</text>
<rect x="219" y="694" width="18" height="18" fill="#ffd60a"/><path d="M229 712l8-8v8z" fill="#3a3a3a"/>
<rect x="43" y="718" width="39" height="2" fill="#76b9ed"/><rect x="170" y="718" width="34" height="2" fill="#76b9ed"/><rect x="211" y="718" width="34" height="2" fill="#76b9ed"/>
<path d="M938 708q-1-5 3-6 2-5 7-4 5 1 5 5 3 1 3 5z" fill="#bcd6f0"/><circle cx="954" cy="696" r="2.200" fill="#e33"/>
<text x="963" y="708" textLength="67" lengthAdjust="spacingAndGlyphs" style="font-size:13px;fill:#e8e8e8">25°F  Cloudy</text>
<path d="M1056 706l4-4 4 4" fill="none" stroke="#ddd"/>
<rect x="1086.500" y="698" width="1.500" height="7" fill="#666"/><circle cx="1087.200" cy="708" r="1" fill="#666"/>
<rect x="1110" y="695" width="5" height="14" rx="2" fill="#e8e8e8"/><rect x="1109" y="710" width="7" height="1.500" fill="#888"/>
<rect x="1132" y="699" width="11" height="8" fill="none" stroke="#ddd"/><rect x="1133" y="700" width="7" height="6" fill="#ddd"/>
<path d="M1160 709q0-9 9-10M1162 709q0-6 6-7M1164.500 709q0-3 3-4" fill="none" stroke="#aaa"/>
<text x="1191" y="699" textLength="36" lengthAdjust="spacingAndGlyphs" style="font-size:10.500px;fill:#e8e8e8">9:46 AM</text>
<text x="1184" y="714" textLength="50" lengthAdjust="spacingAndGlyphs" style="font-size:10.500px;fill:#e8e8e8">11/15/2022</text>
<path d="M1246.500 696.500h13v12h-8l-2 3v-3h-3z" fill="none" stroke="#ddd"/>
</svg>
</body></html>
